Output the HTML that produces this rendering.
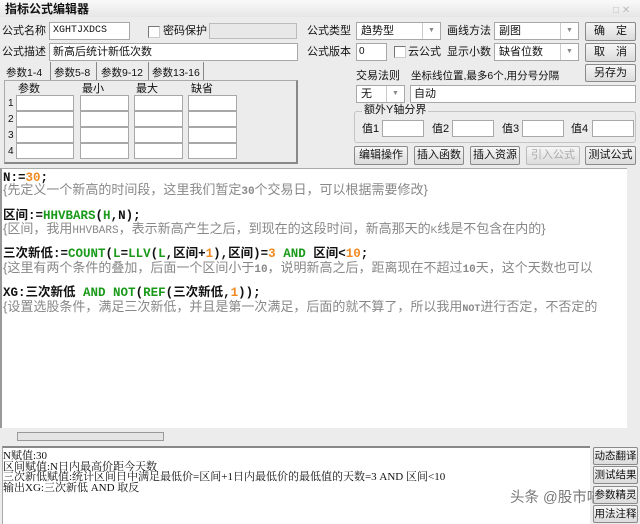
<!DOCTYPE html>
<html><head><meta charset="utf-8"><style>
*{box-sizing:border-box;margin:0;padding:0}
body{width:640px;height:524px;background:#ececec;font-family:"Liberation Sans","Noto Sans CJK SC",sans-serif;font-size:11px;color:#111;position:relative;overflow:hidden}
.a{position:absolute;white-space:nowrap;line-height:1}
.in{position:absolute;background:#fff;border:1px solid #a8a8a8}
.btn{position:absolute;background:linear-gradient(#f6f6f6,#dcdcdc);border:1px solid #8a8a8a;text-align:center;font-size:11px;line-height:17px;border-radius:2px;white-space:nowrap;overflow:hidden}
.sel .ar{position:absolute;right:0;top:0;bottom:0;width:18px;border-left:1px solid #ccc;color:#888;font-size:7px;text-align:center;line-height:16px}
.cb{position:absolute;width:12px;height:12px;border:1px solid #777;background:#fff;border-right-color:#ccc;border-bottom-color:#ccc}
.code{position:absolute;left:3px;font-family:"Liberation Mono","Noto Sans CJK SC",monospace;font-size:12.5px;font-weight:bold;white-space:nowrap;line-height:1}
.cm{position:absolute;left:3px;color:#888;font-size:13px;white-space:nowrap;line-height:1}
.g{color:#1a9a1a}.o{color:#f08a20}
.out{position:absolute;left:3px;font-family:"Liberation Serif","Noto Serif CJK SC",serif;font-size:11px;line-height:11px;white-space:nowrap}
</style></head><body>
<div class="a" style="left:0;top:0;width:640px;height:17px;background:linear-gradient(#fafafa,#e6e6e6)"></div>
<div class="a" style="left:5px;top:3px;font-weight:bold;font-size:12px">指标公式编辑器</div>
<div class="a" style="left:613px;top:6px;color:#bbb;font-size:10px">□ ✕</div>

<div class="a" style="left:2px;top:26px">公式名称</div>
<div class="in" style="left:49px;top:22px;width:81px;height:18px"><span class="a" style="left:3px;top:3px;font-family:'Liberation Mono',monospace;font-size:10px">XGHTJXDCS</span></div>
<div class="cb" style="left:148px;top:26px"></div>
<div class="a" style="left:163px;top:26px">密码保护</div>
<div class="in" style="left:209px;top:23px;width:88px;height:16px;background:#e8e8e8;border-color:#bbb"></div>

<div class="a" style="left:2px;top:47px">公式描述</div>
<div class="in" style="left:49px;top:43px;width:249px;height:18px"><span class="a" style="left:3px;top:3px">新高后统计新低次数</span></div>

<div class="a" style="left:6px;top:68px;font-size:10.5px">参数1-4</div>
<div class="a" style="left:50px;top:62px;height:18px;border-left:1px solid #888"></div>
<div class="a" style="left:54px;top:68px;font-size:10.5px">参数5-8</div>
<div class="a" style="left:96px;top:62px;height:18px;border-left:1px solid #888"></div>
<div class="a" style="left:101px;top:68px;font-size:10.5px">参数9-12</div>
<div class="a" style="left:148px;top:62px;height:18px;border-left:1px solid #888"></div>
<div class="a" style="left:152px;top:68px;font-size:10.5px">参数13-16</div>
<div class="a" style="left:203px;top:62px;height:18px;border-left:1px solid #888"></div>
<div class="a" style="left:4px;top:80px;width:294px;height:84px;border:1px solid #aaa;border-right:2px solid #888;border-bottom:2px solid #888"></div>
<div class="a" style="left:18px;top:84px">参数</div>
<div class="a" style="left:82px;top:84px">最小</div>
<div class="a" style="left:136px;top:84px">最大</div>
<div class="a" style="left:191px;top:84px">缺省</div>
<div class="a" style="left:8px;top:99px;font-size:10px">1</div>
<div class="a" style="left:8px;top:115px;font-size:10px">2</div>
<div class="a" style="left:8px;top:131px;font-size:10px">3</div>
<div class="a" style="left:8px;top:147px;font-size:10px">4</div>
<div id="grid"></div>

<div class="a" style="left:307px;top:26px">公式类型</div>
<div class="in sel" style="left:356px;top:22px;width:85px;height:18px"><span class="a" style="left:4px;top:3px">趋势型</span><span class="ar">▼</span></div>
<div class="a" style="left:447px;top:26px">画线方法</div>
<div class="in sel" style="left:494px;top:22px;width:85px;height:18px"><span class="a" style="left:4px;top:3px">副图</span><span class="ar">▼</span></div>
<div class="btn" style="left:585px;top:22px;width:51px;height:19px">确　定</div>

<div class="a" style="left:307px;top:47px">公式版本</div>
<div class="in" style="left:356px;top:43px;width:31px;height:18px"><span class="a" style="left:2px;top:3px;font-size:10px">0</span></div>
<div class="cb" style="left:394px;top:46px"></div>
<div class="a" style="left:408px;top:47px">云公式</div>
<div class="a" style="left:447px;top:47px">显示小数</div>
<div class="in sel" style="left:494px;top:43px;width:85px;height:18px"><span class="a" style="left:4px;top:3px">缺省位数</span><span class="ar">▼</span></div>
<div class="btn" style="left:585px;top:43px;width:51px;height:19px">取　消</div>

<div class="a" style="left:356px;top:71px">交易法则</div>
<div class="a" style="left:411px;top:71px;font-size:10.5px">坐标线位置,最多6个,用分号分隔</div>
<div class="btn" style="left:585px;top:64px;width:51px;height:18px">另存为</div>
<div class="in sel" style="left:356px;top:85px;width:49px;height:18px"><span class="a" style="left:4px;top:3px">无</span><span class="ar">▼</span></div>
<div class="in" style="left:410px;top:85px;width:226px;height:18px"><span class="a" style="left:3px;top:3px">自动</span></div>

<div class="a" style="left:354px;top:111px;width:282px;height:32px;border:1px solid #c4c4c4;border-radius:3px"></div>
<div class="a" style="left:362px;top:105px;background:#ececec;padding:0 2px">额外Y轴分界</div>
<div class="a" style="left:362px;top:124px">值1</div><div class="in" style="left:382px;top:120px;width:42px;height:17px"></div>
<div class="a" style="left:432px;top:124px">值2</div><div class="in" style="left:452px;top:120px;width:42px;height:17px"></div>
<div class="a" style="left:502px;top:124px">值3</div><div class="in" style="left:522px;top:120px;width:42px;height:17px"></div>
<div class="a" style="left:571px;top:124px">值4</div><div class="in" style="left:592px;top:120px;width:42px;height:17px"></div>

<div class="btn" style="left:354px;top:146px;width:54px;height:19px">编辑操作</div>
<div class="btn" style="left:414px;top:146px;width:50px;height:19px">插入函数</div>
<div class="btn" style="left:470px;top:146px;width:50px;height:19px">插入资源</div>
<div class="btn" style="left:526px;top:146px;width:54px;height:19px;color:#aaa;border-color:#bbb">引入公式</div>
<div class="btn" style="left:585px;top:146px;width:51px;height:19px">测试公式</div>

<div class="a" style="left:0;top:168px;width:627px;height:260px;background:#fff;border-left:2px solid #999;border-top:1px solid #aaa"></div>
<div class="code" style="top:172px">N:=<span class="o">30</span>;</div>
<div class="cm" style="top:183px">{先定义一个新高的时间段，这里我们暂定<b style="font-family:'Liberation Mono';font-size:11px">30</b>个交易日，可以根据需要修改}</div>
<div class="code" style="top:210px">区间:=<span class="g">HHVBARS</span>(<span class="g">H</span>,N);</div>
<div class="cm" style="top:222px">{区间，我用<span style="font-family:'Liberation Mono';font-size:11px">HHVBARS</span>，表示新高产生之后，到现在的这段时间，新高那天的<span style="font-size:10px">K</span>线是不包含在内的}</div>
<div class="code" style="top:248px">三次新低:=<span class="g">COUNT</span>(<span class="g">L</span>=<span class="g">LLV</span>(<span class="g">L</span>,区间+<span class="o">1</span>),区间)=<span class="o">3</span> <span class="g">AND</span> 区间&lt;<span class="o">10</span>;</div>
<div class="cm" style="top:261px">{这里有两个条件的叠加，后面一个区间小于<b style="font-family:'Liberation Mono';font-size:11px">10</b>，说明新高之后，距离现在不超过<b style="font-family:'Liberation Mono';font-size:11px">10</b>天，这个天数也可以</div>
<div class="code" style="top:287px">XG:三次新低 <span class="g">AND</span> <span class="g">NOT</span>(<span class="g">REF</span>(三次新低,<span class="o">1</span>));</div>
<div class="cm" style="top:300px">{设置选股条件，满足三次新低，并且是第一次满足，后面的就不算了，所以我用<b style="font-family:'Liberation Mono';font-size:10px">NOT</b>进行否定，不否定的</div>
<div class="a" style="left:627px;top:168px;width:13px;height:260px;background:#ececec"></div>
<div class="a" style="left:17px;top:432px;width:147px;height:9px;border:1px solid #999;background:#e4e4e4"></div>

<div class="a" style="left:2px;top:446px;width:588px;height:78px;background:#fff;border-top:2px solid #888;border-left:1px solid #aaa"></div>
<div class="out" style="top:451px">N赋值:30</div>
<div class="out" style="top:462px">区间赋值:N日内最高价距今天数</div>
<div class="out" style="top:472px">三次新低赋值:统计区间日中满足最低价=区间+1日内最低价的最低值的天数=3 AND 区间&lt;10</div>
<div class="out" style="top:483px">输出XG:三次新低 AND 取反</div>
<div class="a" style="left:510px;top:491px;color:#777;font-size:14.5px">头条 @股市喵巧</div>

<div class="btn" style="left:593px;top:447px;width:45px;height:18px;font-size:10.5px;line-height:16px">动态翻译</div>
<div class="btn" style="left:593px;top:466px;width:45px;height:18px;font-size:10.5px;line-height:16px">测试结果</div>
<div class="btn" style="left:593px;top:486px;width:45px;height:18px;font-size:10.5px;line-height:16px">参数精灵</div>
<div class="btn" style="left:593px;top:505px;width:45px;height:18px;font-size:10.5px;line-height:16px">用法注释</div>
<script>
var g=document.getElementById('grid'),xs=[[16,58],[80,49],[134,49],[188,49]],h='';
for(var r=0;r<4;r++)for(var c=0;c<4;c++)h+='<div class="in" style="left:'+xs[c][0]+'px;top:'+(95+r*16)+'px;width:'+xs[c][1]+'px;height:16px"></div>';
g.innerHTML=h;
</script>
</body></html>
